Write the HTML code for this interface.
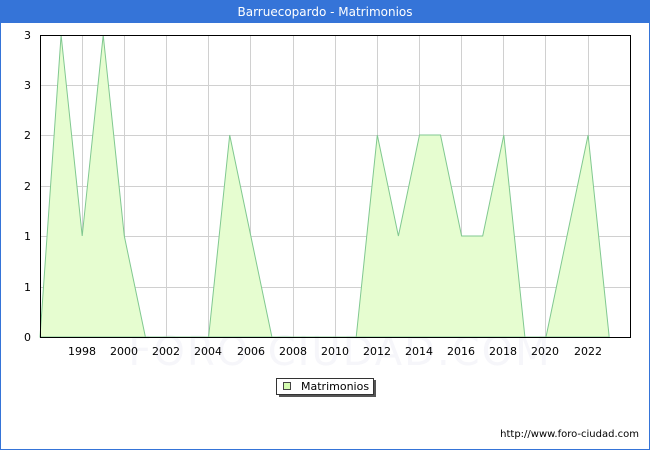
<!DOCTYPE html>
<html><head><style>
html,body{margin:0;padding:0;background:#fff;}
body{width:650px;height:450px;overflow:hidden;font-family:"DejaVu Sans","Liberation Sans",sans-serif;}
</style></head><body>
<svg width="650" height="450" xmlns="http://www.w3.org/2000/svg" font-family="DejaVu Sans, Liberation Sans, sans-serif">
<rect x="0.5" y="0.5" width="649" height="449" fill="#fff" stroke="#3574d8"/>
<rect x="0" y="0" width="650" height="23" fill="#3574d8"/>
<text x="325" y="16" text-anchor="middle" fill="#fff" font-size="12">Barruecopardo - Matrimonios</text>
<text x="340" y="365" text-anchor="middle" fill="#f6f6fa" font-size="40" letter-spacing="2">FORO-CIUDAD.COM</text>
<g stroke="#d0d0d0" stroke-width="1">
<line x1="82.5" y1="35" x2="82.5" y2="337"/><line x1="124.5" y1="35" x2="124.5" y2="337"/><line x1="166.5" y1="35" x2="166.5" y2="337"/><line x1="208.5" y1="35" x2="208.5" y2="337"/><line x1="250.5" y1="35" x2="250.5" y2="337"/><line x1="293.5" y1="35" x2="293.5" y2="337"/><line x1="335.5" y1="35" x2="335.5" y2="337"/><line x1="377.5" y1="35" x2="377.5" y2="337"/><line x1="419.5" y1="35" x2="419.5" y2="337"/><line x1="461.5" y1="35" x2="461.5" y2="337"/><line x1="503.5" y1="35" x2="503.5" y2="337"/><line x1="545.5" y1="35" x2="545.5" y2="337"/><line x1="588.5" y1="35" x2="588.5" y2="337"/>
<line x1="40" y1="85.5" x2="630" y2="85.5"/><line x1="40" y1="135.5" x2="630" y2="135.5"/><line x1="40" y1="186.5" x2="630" y2="186.5"/><line x1="40" y1="236.5" x2="630" y2="236.5"/><line x1="40" y1="287.5" x2="630" y2="287.5"/>
</g>
<polygon fill="#e6fdd0" stroke="#80c890" stroke-width="1" points="40,337 61.1,35 82.2,236 103.2,35 124.3,236 145.4,337 208.6,337 229.7,135 250.8,236 271.9,337 356.2,337 377.3,135 398.4,236 419.5,135 440.5,135 461.6,236 482.7,236 503.8,135 524.9,337 546,337 567,236 588.1,135 609.2,337"/>
<rect x="40.5" y="35.5" width="590" height="302" fill="none" stroke="#000"/>
<g font-size="11" fill="#000" text-anchor="end">
<text x="31" y="341">0</text><text x="31" y="291">1</text><text x="31" y="240">1</text><text x="31" y="190">2</text><text x="31" y="139">2</text><text x="31" y="89">3</text><text x="31" y="39">3</text>
</g>
<g font-size="11" fill="#000" text-anchor="middle">
<text x="82" y="355">1998</text><text x="124" y="355">2000</text><text x="166" y="355">2002</text><text x="208" y="355">2004</text><text x="251" y="355">2006</text><text x="293" y="355">2008</text><text x="335" y="355">2010</text><text x="377" y="355">2012</text><text x="419" y="355">2014</text><text x="461" y="355">2016</text><text x="503" y="355">2018</text><text x="545" y="355">2020</text><text x="588" y="355">2022</text>
</g>
<rect x="279" y="380" width="97" height="17" fill="#555"/>
<rect x="276.5" y="378.5" width="97" height="16" fill="#fff" stroke="#333"/>
<rect x="283.5" y="382.5" width="7" height="7" fill="#d4fcb0" stroke="#444"/>
<text x="301" y="390" font-size="11" fill="#000">Matrimonios</text>
<text x="639" y="437" font-size="10" fill="#000" text-anchor="end">http://www.foro-ciudad.com</text>
</svg>
</body></html>
